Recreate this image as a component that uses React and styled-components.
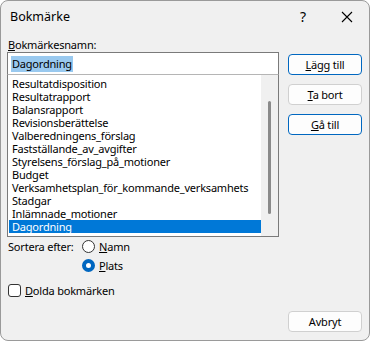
import styled, { createGlobalStyle } from "styled-components";

const GlobalStyle = createGlobalStyle`
  html, body {
    margin: 0;
    padding: 0;
    background: #ffffff;
  }
  * {
    box-sizing: border-box;
  }
`;

const Window = styled.div`
  width: 370px;
  height: 341px;
  background: #f0f0f0;
  border: 1px solid #9a9a9a;
  border-radius: 8px;
  font-family: "Noto Sans", "Open Sans", sans-serif;
  font-size: 11px;
  letter-spacing: -0.2px;
  color: #000;
  display: flex;
  flex-direction: column;
  overflow: hidden;
`;

const TitleBar = styled.div`
  height: 36px;
  display: flex;
  align-items: center;
  padding-left: 9px;
`;

const Title = styled.div`
  flex: 1;
  font-size: 12.5px;
  letter-spacing: 0;
  margin-top: -5px;
`;

const TitleButton = styled.div`
  width: 44px;
  height: 30px;
  display: flex;
  align-items: center;
  justify-content: center;
  margin-top: -5px;
  font-size: 14px;
`;

const Body = styled.div`
  flex: 1;
  display: flex;
  flex-direction: column;
  padding: 0 7px 8px 6px;
`;

const Main = styled.div`
  display: flex;
  gap: 9px;
`;

const LeftCol = styled.div`
  width: 273px;
  display: flex;
  flex-direction: column;
`;

const Label = styled.div`
  height: 15px;
  line-height: 15px;
  padding-left: 1px;
`;

const Input = styled.div`
  height: 23px;
  background: #fff;
  border: 1px solid #7a7a7a;
  display: flex;
  align-items: center;
  padding-left: 3px;
`;

const Selected = styled.span`
  background: #99c9ef;
  padding: 0 1px;
  line-height: 16px;
`;

const List = styled.div`
  height: 163px;
  margin-top: -1px;
  background: #fff;
  border: 1px solid #7a7a7a;
  border-top-color: #b5b5b5;
  display: flex;
  padding: 2px 0 2px 1px;
`;

const Items = styled.div`
  flex: 1;
  display: flex;
  flex-direction: column;
`;

const Item = styled.div`
  height: 13px;
  line-height: 13px;
  padding-left: 3px;
  white-space: nowrap;
  background: ${(p) => (p.active ? "#0078d7" : "transparent")};
  color: ${(p) => (p.active ? "#fff" : "#000")};
`;

const Scrollbar = styled.div`
  width: 17px;
  margin: -2px 0 -2px 0;
  background: #f0f0f0;
  display: flex;
  justify-content: center;
  padding-top: 26px;
`;

const Thumb = styled.div`
  width: 3px;
  height: 113px;
  background: #8a8a8a;
  border-radius: 2px;
`;

const RightCol = styled.div`
  display: flex;
  flex-direction: column;
  gap: 9px;
  padding-top: 17px;
`;

const Button = styled.div`
  width: 74px;
  height: 21px;
  background: #fdfdfd;
  border: 1px solid ${(p) => (p.primary ? "#0067c0" : "#d0d0d0")};
  border-radius: 4px;
  display: flex;
  align-items: center;
  justify-content: center;
`;

const SortRow = styled.div`
  display: flex;
`;

const SortLabel = styled.div`
  width: 75px;
  line-height: 19px;
  padding-left: 1px;
`;

const RadioGroup = styled.div`
  display: flex;
  flex-direction: column;
`;

const Option = styled.label`
  display: flex;
  align-items: center;
  height: 19px;
  gap: 4px;
`;

const RadioDot = styled.span`
  width: 13px;
  height: 13px;
  border-radius: 50%;
  border: ${(p) => (p.checked ? "4px solid #0067c0" : "1px solid #333")};
  background: #fff;
`;

const CheckRow = styled(Option)`
  margin-top: 6px;
  padding-left: 1px;
`;

const CheckBox = styled.span`
  width: 13px;
  height: 13px;
  border: 1px solid #333;
  border-radius: 3px;
  background: #fff;
`;

const Footer = styled.div`
  margin-top: auto;
  display: flex;
  justify-content: flex-end;
`;

const U = styled.span`
  text-decoration: underline;
  text-underline-offset: 1px;
`;

const items = [
  "Resultatdisposition",
  "Resultatrapport",
  "Balansrapport",
  "Revisionsberättelse",
  "Valberedningens_förslag",
  "Fastställande_av_avgifter",
  "Styrelsens_förslag_på_motioner",
  "Budget",
  "Verksamhetsplan_för_kommande_verksamhets",
  "Stadgar",
  "Inlämnade_motioner",
  "Dagordning",
];

export default function App() {
  return (
    <>
      <GlobalStyle />
      <Window>
        <TitleBar>
          <Title>Bokmärke</Title>
          <TitleButton>?</TitleButton>
          <TitleButton>
            <svg width="12" height="12" viewBox="0 0 12 12">
              <path d="M1 1L11 11M11 1L1 11" stroke="#000" strokeWidth="1.1" />
            </svg>
          </TitleButton>
        </TitleBar>
        <Body>
          <Main>
            <LeftCol>
              <Label>
                <U>B</U>okmärkesnamn:
              </Label>
              <Input>
                <Selected>Dagordning</Selected>
              </Input>
              <List>
                <Items>
                  {items.map((it) => (
                    <Item key={it} active={it === "Dagordning"}>
                      {it}
                    </Item>
                  ))}
                </Items>
                <Scrollbar>
                  <Thumb />
                </Scrollbar>
              </List>
            </LeftCol>
            <RightCol>
              <Button primary>
                <span><U>L</U>ägg till</span>
              </Button>
              <Button>
                <span><U>T</U>a bort</span>
              </Button>
              <Button primary>
                <span><U>G</U>å till</span>
              </Button>
            </RightCol>
          </Main>
          <SortRow>
            <SortLabel>Sortera efter:</SortLabel>
            <RadioGroup>
              <Option>
                <RadioDot />
                <span><U>N</U>amn</span>
              </Option>
              <Option>
                <RadioDot checked />
                <span><U>P</U>lats</span>
              </Option>
            </RadioGroup>
          </SortRow>
          <CheckRow>
            <CheckBox />
            <span><U>D</U>olda bokmärken</span>
          </CheckRow>
          <Footer>
            <Button>Avbryt</Button>
          </Footer>
        </Body>
      </Window>
    </>
  );
}
